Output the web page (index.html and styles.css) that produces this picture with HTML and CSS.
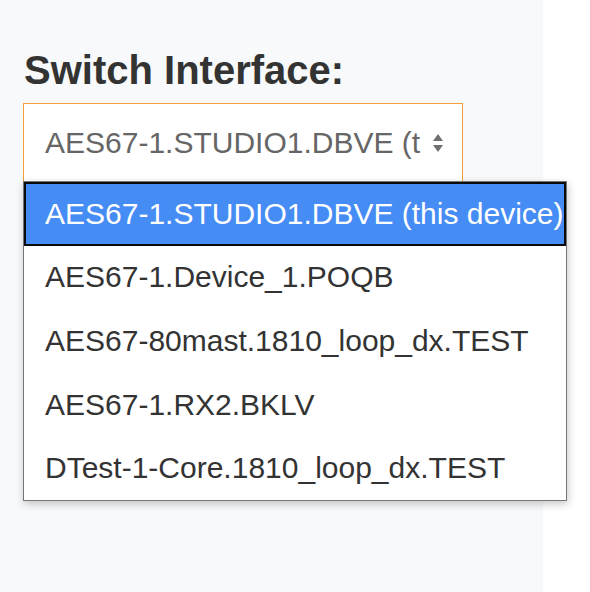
FILE: index.html
```html
<!DOCTYPE html>
<html>
<head>
<meta charset="utf-8">
<link rel="stylesheet" href="styles.css">
</head>
<body>
<div class="page">
  <div class="panel">
    <h2 class="title">Switch Interface:</h2>
    <div class="select-wrap">
      <div class="select">
        <span class="select-text">AES67-1.STUDIO1.DBVE (t</span>
        <svg class="arrows" width="12" height="20" viewBox="0 0 12 20">
          <path d="M6 1 L11 8 L1 8 Z" fill="#707070"/>
          <path d="M1 12 L11 12 L6 19 Z" fill="#707070"/>
        </svg>
      </div>
      <div class="dropdown">
        <div class="option selected">AES67-1.STUDIO1.DBVE (this device)</div>
        <div class="option">AES67-1.Device_1.POQB</div>
        <div class="option">AES67-80mast.1810_loop_dx.TEST</div>
        <div class="option">AES67-1.RX2.BKLV</div>
        <div class="option">DTest-1-Core.1810_loop_dx.TEST</div>
      </div>
    </div>
  </div>
  <div class="side"></div>
</div>
</body>
</html>
```
FILE: styles.css
```css
html, body {
  margin: 0;
  padding: 0;
  background: #ffffff;
  font-family: "Liberation Sans", Arial, sans-serif;
}
.page {
  display: flex;
  width: 590px;
  height: 592px;
  overflow: hidden;
}
.panel {
  width: 543px;
  flex: none;
  background: #f8f9fa;
  padding: 46px 0 0 23px;
  box-sizing: border-box;
}
.side {
  flex: 1;
  background: #ffffff;
}
.title {
  margin: 0 0 9px 1px;
  font-size: 40px;
  line-height: 48px;
  font-weight: bold;
  color: #333333;
}
.select-wrap {
  position: relative;
}
.select {
  width: 440px;
  height: 80px;
  box-sizing: border-box;
  border: 1px solid #f0a03a;
  background: #ffffff;
  display: flex;
  align-items: center;
  padding: 0 18px 0 21px;
  gap: 6px;
}
.select-text {
  flex: 1;
  min-width: 0;
  white-space: nowrap;
  font-size: 30px;
  color: #666666;
}
.arrows {
  flex: none;
  display: block;
}
.dropdown {
  position: absolute;
  top: 78px;
  left: 0;
  width: 544px;
  box-sizing: border-box;
  border: 1px solid #767676;
  background: #ffffff;
  box-shadow: 1px 3px 8px rgba(0, 0, 0, 0.22);
  display: flex;
  flex-direction: column;
}
.option {
  height: 63.6px;
  box-sizing: border-box;
  display: flex;
  align-items: center;
  padding-left: 21px;
  font-size: 30px;
  color: #333333;
  white-space: nowrap;
}
.option.selected {
  background: #468cf5;
  color: #ffffff;
  border: 2px solid #0a0a0a;
  padding-left: 19px;
}
```
